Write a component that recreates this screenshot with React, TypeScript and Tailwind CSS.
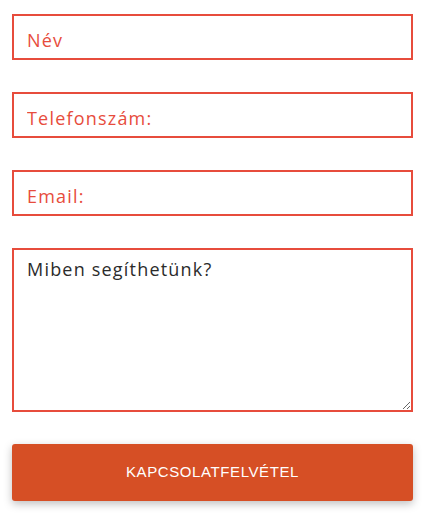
export default function App() {
  const fields = [
    { name: "name", placeholder: "Név", type: "text" },
    { name: "phone", placeholder: "Telefonszám:", type: "tel" },
    { name: "email", placeholder: "Email:", type: "email" },
  ];

  return (
    <div className="min-h-[519px] bg-white">
      <form
        className="ml-[12px] w-[401px] pt-[14px] flex flex-col gap-[32px]"
        style={{ fontFamily: "'Open Sans', 'Noto Sans', sans-serif" }}
        onSubmit={(e) => e.preventDefault()}
      >
        {fields.map((f) => (
          <input
            key={f.name}
            name={f.name}
            type={f.type}
            placeholder={f.placeholder}
            className="h-[46px] w-full border-2 border-[#e74c3c] px-[13px] pt-[6px] text-[18px] tracking-[1.2px] text-[#333] placeholder:text-[#e74c3c] outline-none"
          />
        ))}
        <textarea
          name="message"
          placeholder="Miben segíthetünk?"
          className="h-[164px] w-full border-2 border-[#e74c3c] px-[13px] py-[6px] text-[18px] tracking-[1.2px] text-[#333] placeholder:text-[#2b2b2b] outline-none"
        />
        <button
          type="submit"
          className="h-[57px] w-full rounded-[3px] bg-[#d64f25] text-white text-[15px] tracking-[0.6px] shadow-[0_3px_8px_rgba(0,0,0,0.25)]"
          style={{ fontFamily: "'Liberation Sans', Arial, sans-serif" }}
        >
          KAPCSOLATFELVÉTEL
        </button>
      </form>
    </div>
  );
}
